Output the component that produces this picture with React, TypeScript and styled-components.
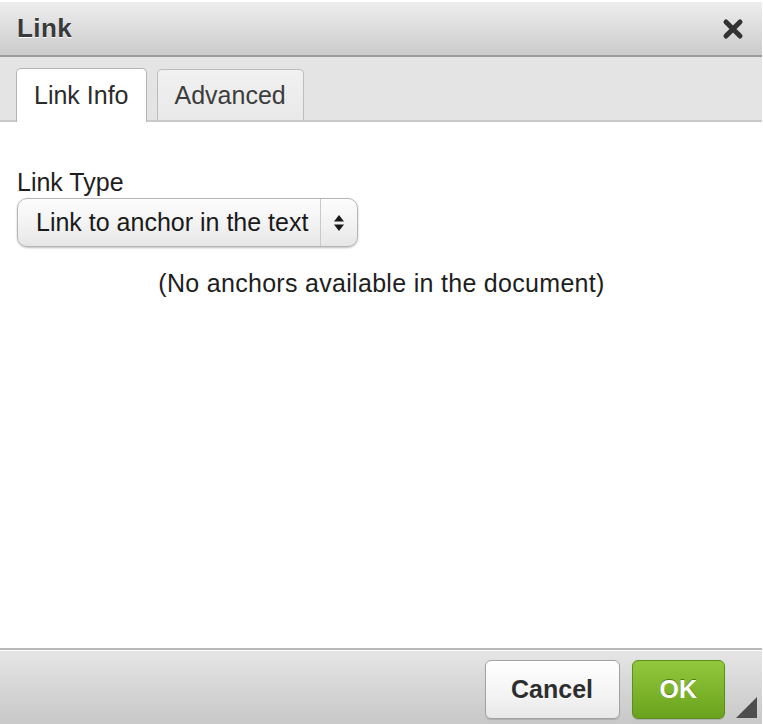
import React, { useState } from "react";
import styled, { createGlobalStyle } from "styled-components";

const GlobalStyle = createGlobalStyle`
    html, body {
        margin: 0;
        padding: 0;
        background: #ffffff;
    }
    body {
        font-family: "Liberation Sans", Arial, Helvetica, sans-serif;
        color: #222;
    }
`;

const Dialog = styled.div`
    width: 762px;
    height: 722px;
    margin-top: 2px;
    display: flex;
    flex-direction: column;
    background: #fff;
    overflow: hidden;
`;

const TitleBar = styled.div`
    height: 53px;
    flex-shrink: 0;
    display: flex;
    align-items: center;
    justify-content: space-between;
    padding: 0 17px;
    background: linear-gradient(to bottom, #eeeeee 0%, #d9d9d9 60%, #cbcbcb 100%);
    border-bottom: 2px solid #9a9a9a;
`;

const Title = styled.div`
    font-size: 26px;
    font-weight: 700;
    color: #3a3a3a;
    text-shadow: 0 1px 0 #ffffff;
    letter-spacing: 0.4px;
`;

const CloseButton = styled.button`
    border: 0;
    background: none;
    padding: 0;
    width: 24px;
    height: 24px;
    display: flex;
    align-items: center;
    justify-content: center;
    cursor: pointer;
`;

const TabStrip = styled.div`
    height: 65px;
    flex-shrink: 0;
    display: flex;
    align-items: flex-end;
    gap: 10px;
    padding: 0 16px;
    background: #e4e4e4;
    border-bottom: 2px solid #c9c9c9;
    box-sizing: border-box;
`;

const Tab = styled.div<{ $active?: boolean }>`
    height: ${p => (p.$active ? "54px" : "51px")};
    box-sizing: border-box;
    display: flex;
    align-items: center;
    padding: 0 17px;
    font-size: 25px;
    color: ${p => (p.$active ? "#2b2b2b" : "#3d3d3d")};
    background: ${p => (p.$active ? "#ffffff" : "linear-gradient(to bottom, #f1f1f1, #e9e9e9)")};
    border: 1px solid ${p => (p.$active ? "#b4b4b4" : "#bdbdbd")};
    border-bottom: none;
    border-radius: 5px 5px 0 0;
    margin-bottom: ${p => (p.$active ? "-2px" : "0")};
    cursor: pointer;
`;

const Body = styled.div`
    flex: 1;
    padding: 46px 16px 0 17px;
    display: flex;
    flex-direction: column;
`;

const Label = styled.div`
    font-size: 25px;
    line-height: 28px;
    color: #1e1e1e;
`;

const SelectBox = styled.div`
    margin-top: 2px;
    width: 341px;
    height: 49px;
    box-sizing: border-box;
    display: flex;
    align-items: stretch;
    border: 1px solid #b5b5b5;
    border-radius: 10px;
    background: linear-gradient(to bottom, #fdfdfd 0%, #f2f2f2 55%, #e6e6e6 100%);
    box-shadow: 0 1px 2px rgba(0, 0, 0, 0.25);
`;

const SelectText = styled.div`
    flex: 1;
    display: flex;
    align-items: center;
    padding-left: 18px;
    font-size: 25px;
    color: #1a1a1a;
    white-space: nowrap;
`;

const SelectArrows = styled.div`
    width: 36px;
    border-left: 1px solid #c9c9c9;
    display: flex;
    align-items: center;
    justify-content: center;
`;

const Note = styled.div`
    margin-top: 22px;
    text-align: center;
    font-size: 25px;
    letter-spacing: 0.3px;
    color: #1e1e1e;
`;

const Footer = styled.div`
    height: 76px;
    flex-shrink: 0;
    box-sizing: border-box;
    border-top: 2px solid #b9b9b9;
    box-shadow: inset 0 1px 0 #ffffff;
    background: linear-gradient(to bottom, #e6e6e6 0%, #d6d6d6 50%, #c8c8c8 100%);
    display: flex;
    align-items: flex-start;
    justify-content: flex-end;
    padding: 10px 37px 0 0;
    gap: 12px;
    position: relative;
`;

const Button = styled.button<{ $primary?: boolean }>`
    height: 59px;
    box-sizing: border-box;
    padding: 0 ${p => (p.$primary ? "27px" : "25px")};
    min-width: ${p => (p.$primary ? "92px" : "135px")};
    font-family: "Liberation Sans", Arial, Helvetica, sans-serif;
    font-size: 25px;
    font-weight: 700;
    border-radius: 6px;
    cursor: pointer;
    color: ${p => (p.$primary ? "#ffffff" : "#2e2e2e")};
    border: 1px solid ${p => (p.$primary ? "#5d8f1c" : "#a3a3a3")};
    background: ${p =>
        p.$primary
            ? "linear-gradient(to bottom, #92c83c 0%, #7eb52c 50%, #69a21d 100%)"
            : "linear-gradient(to bottom, #ffffff 0%, #f3f3f3 60%, #e8e8e8 100%)"};
    text-shadow: ${p => (p.$primary ? "0 -1px 0 rgba(40,70,10,0.6)" : "0 1px 0 #ffffff")};
    box-shadow: 0 1px 1px rgba(0, 0, 0, 0.15);
`;

const ResizeGrip = styled.div`
    position: absolute;
    right: 5px;
    bottom: 6px;
    width: 21px;
    height: 21px;
`;

const CloseIcon = () => (
    <svg width="22" height="22" viewBox="0 0 22 22">
        <path d="M4 4 L18 18 M18 4 L4 18" stroke="#333" strokeWidth="5" strokeLinecap="round" />
    </svg>
);

const UpDownIcon = () => (
    <svg width="12" height="18" viewBox="0 0 12 18">
        <path d="M6 1 L11 7.5 L1 7.5 Z" fill="#1a1a1a" />
        <path d="M6 17 L11 10.5 L1 10.5 Z" fill="#1a1a1a" />
    </svg>
);

const App = () => {
    const [tab, setTab] = useState("info");

    return (
        <>
            <GlobalStyle />
            <Dialog>
                <TitleBar>
                    <Title>Link</Title>
                    <CloseButton aria-label="Close">
                        <CloseIcon />
                    </CloseButton>
                </TitleBar>
                <TabStrip>
                    <Tab $active={tab === "info"} onClick={() => setTab("info")}>Link Info</Tab>
                    <Tab $active={tab === "advanced"} onClick={() => setTab("advanced")}>Advanced</Tab>
                </TabStrip>
                <Body>
                    <Label>Link Type</Label>
                    <SelectBox>
                        <SelectText>Link to anchor in the text</SelectText>
                        <SelectArrows>
                            <UpDownIcon />
                        </SelectArrows>
                    </SelectBox>
                    <Note>(No anchors available in the document)</Note>
                </Body>
                <Footer>
                    <Button>Cancel</Button>
                    <Button $primary>OK</Button>
                    <ResizeGrip>
                        <svg width="21" height="21" viewBox="0 0 21 21">
                            <path d="M21 0 L21 21 L0 21 Z" fill="#4e4e4e" />
                        </svg>
                    </ResizeGrip>
                </Footer>
            </Dialog>
        </>
    );
};

export default App;
